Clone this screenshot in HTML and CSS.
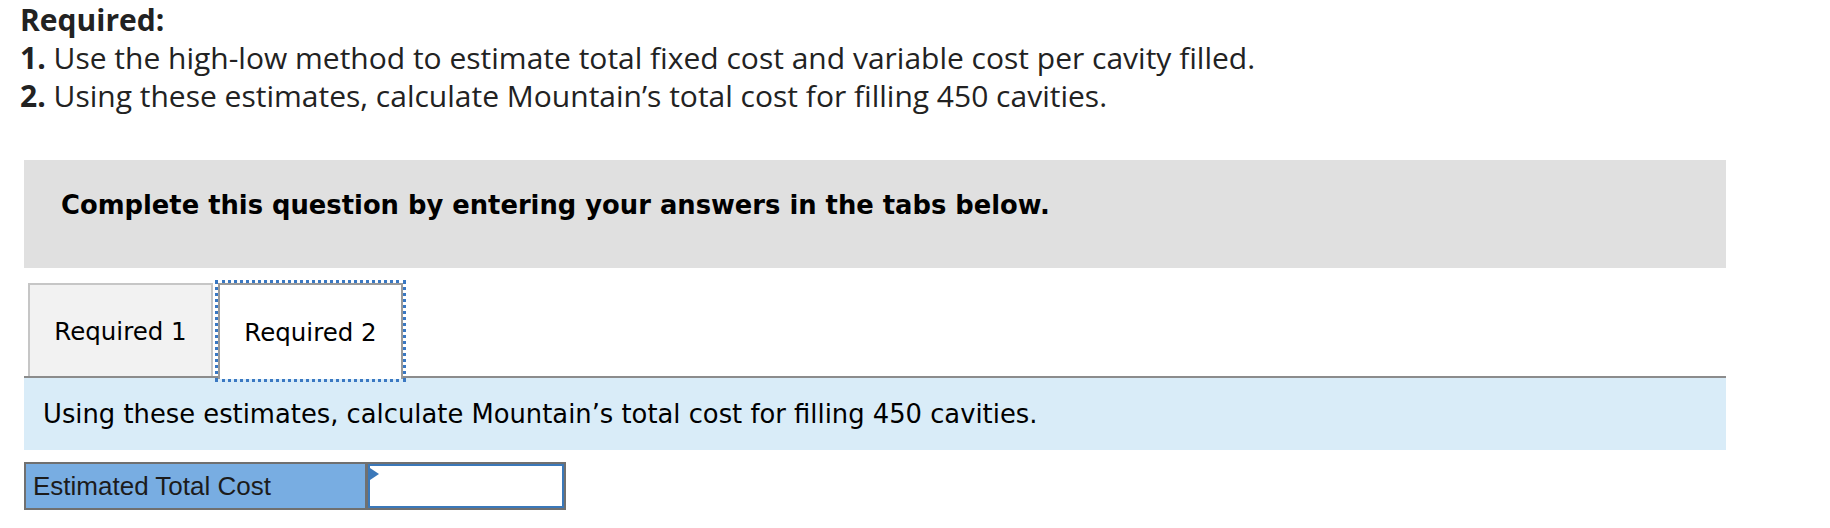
FILE: index.html
```html
<!DOCTYPE html>
<html>
<head>
<meta charset="utf-8">
<link rel="stylesheet" href="styles.css">
</head>
<body>
<div class="page">
  <div class="required">
    <p class="req-title">Required:</p>
    <p class="req-line"><b>1.</b> Use the high-low method to estimate total fixed cost and variable cost per cavity filled.</p>
    <p class="req-line"><b>2.</b> Using these estimates, calculate Mountain’s total cost for filling 450 cavities.</p>
  </div>
  <div class="notice">Complete this question by entering your answers in the tabs below.</div>
  <div class="tabs">
    <div class="tab">Required 1</div>
    <div class="tab active">Required 2</div>
  </div>
  <div class="panel">Using these estimates, calculate Mountain’s total cost for filling 450 cavities.</div>
  <div class="answer-row">
    <div class="answer-label">Estimated Total Cost</div>
    <div class="answer-input"><span class="flag"></span></div>
  </div>
</div>
</body>
</html>
```
FILE: styles.css
```css
html, body {
  margin: 0;
  padding: 0;
  background: #ffffff;
}
.page {
  padding: 1px 0 0 24px;
  width: 1702px;
}
.required {
  margin-left: -4px;
  font-family: "Open Sans", "Liberation Sans", sans-serif;
  font-size: 30px;
  line-height: 38px;
  color: #222222;
}
.required p {
  margin: 0;
}
.req-title {
  font-weight: 700;
}
.req-line b {
  font-weight: 700;
}
.notice {
  margin-top: 45px;
  height: 108px;
  background: #e0e0e0;
  box-sizing: border-box;
  padding: 0 0 18px 37px;
  display: flex;
  align-items: center;
  font-family: "DejaVu Sans", Verdana, sans-serif;
  font-weight: 700;
  font-size: 25.8px;
  color: #000000;
}
.tabs {
  margin-top: 15px;
  margin-left: 4px;
  display: flex;
  gap: 5px;
  height: 93px;
}
.tab {
  width: 185px;
  box-sizing: border-box;
  border: 2px solid #c6c6c6;
  border-bottom: none;
  background: #f2f2f2;
  display: flex;
  align-items: center;
  justify-content: center;
  padding-top: 2px;
  font-family: "DejaVu Sans", Verdana, sans-serif;
  font-size: 24.5px;
  color: #000000;
}
.tab.active {
  background: #ffffff;
  border-color: #9a9a9a;
  outline: 3px dotted #3a78c2;
  outline-offset: 0px;
  position: relative;
  z-index: 1;
  height: 96px;
  padding-top: 0;
}
.panel {
  border-top: 2px solid #8c8c8c;
  height: 72px;
  background: #d9ecf8;
  padding-left: 19px;
  display: flex;
  align-items: center;
  font-family: "DejaVu Sans", Verdana, sans-serif;
  font-size: 25.8px;
  color: #000000;
}
.answer-row {
  margin-top: 12px;
  display: flex;
  width: 542px;
  box-sizing: border-box;
  height: 48px;
  border: 2px solid #707070;
}
.answer-label {
  width: 342px;
  box-sizing: border-box;
  background: #78ade2;
  border-right: 3px solid #707070;
  display: flex;
  align-items: center;
  padding-left: 7px;
  font-family: "Liberation Sans", Arial, sans-serif;
  font-size: 26px;
  color: #1c1c1c;
}
.answer-input {
  flex: 1;
  border: 2px solid #3b78b9;
  background: #ffffff;
  position: relative;
}
.flag {
  position: absolute;
  left: 0;
  top: 2px;
  width: 0;
  height: 0;
  border-left: 9px solid #3b78b9;
  border-top: 6px solid transparent;
  border-bottom: 6px solid transparent;
}
```
